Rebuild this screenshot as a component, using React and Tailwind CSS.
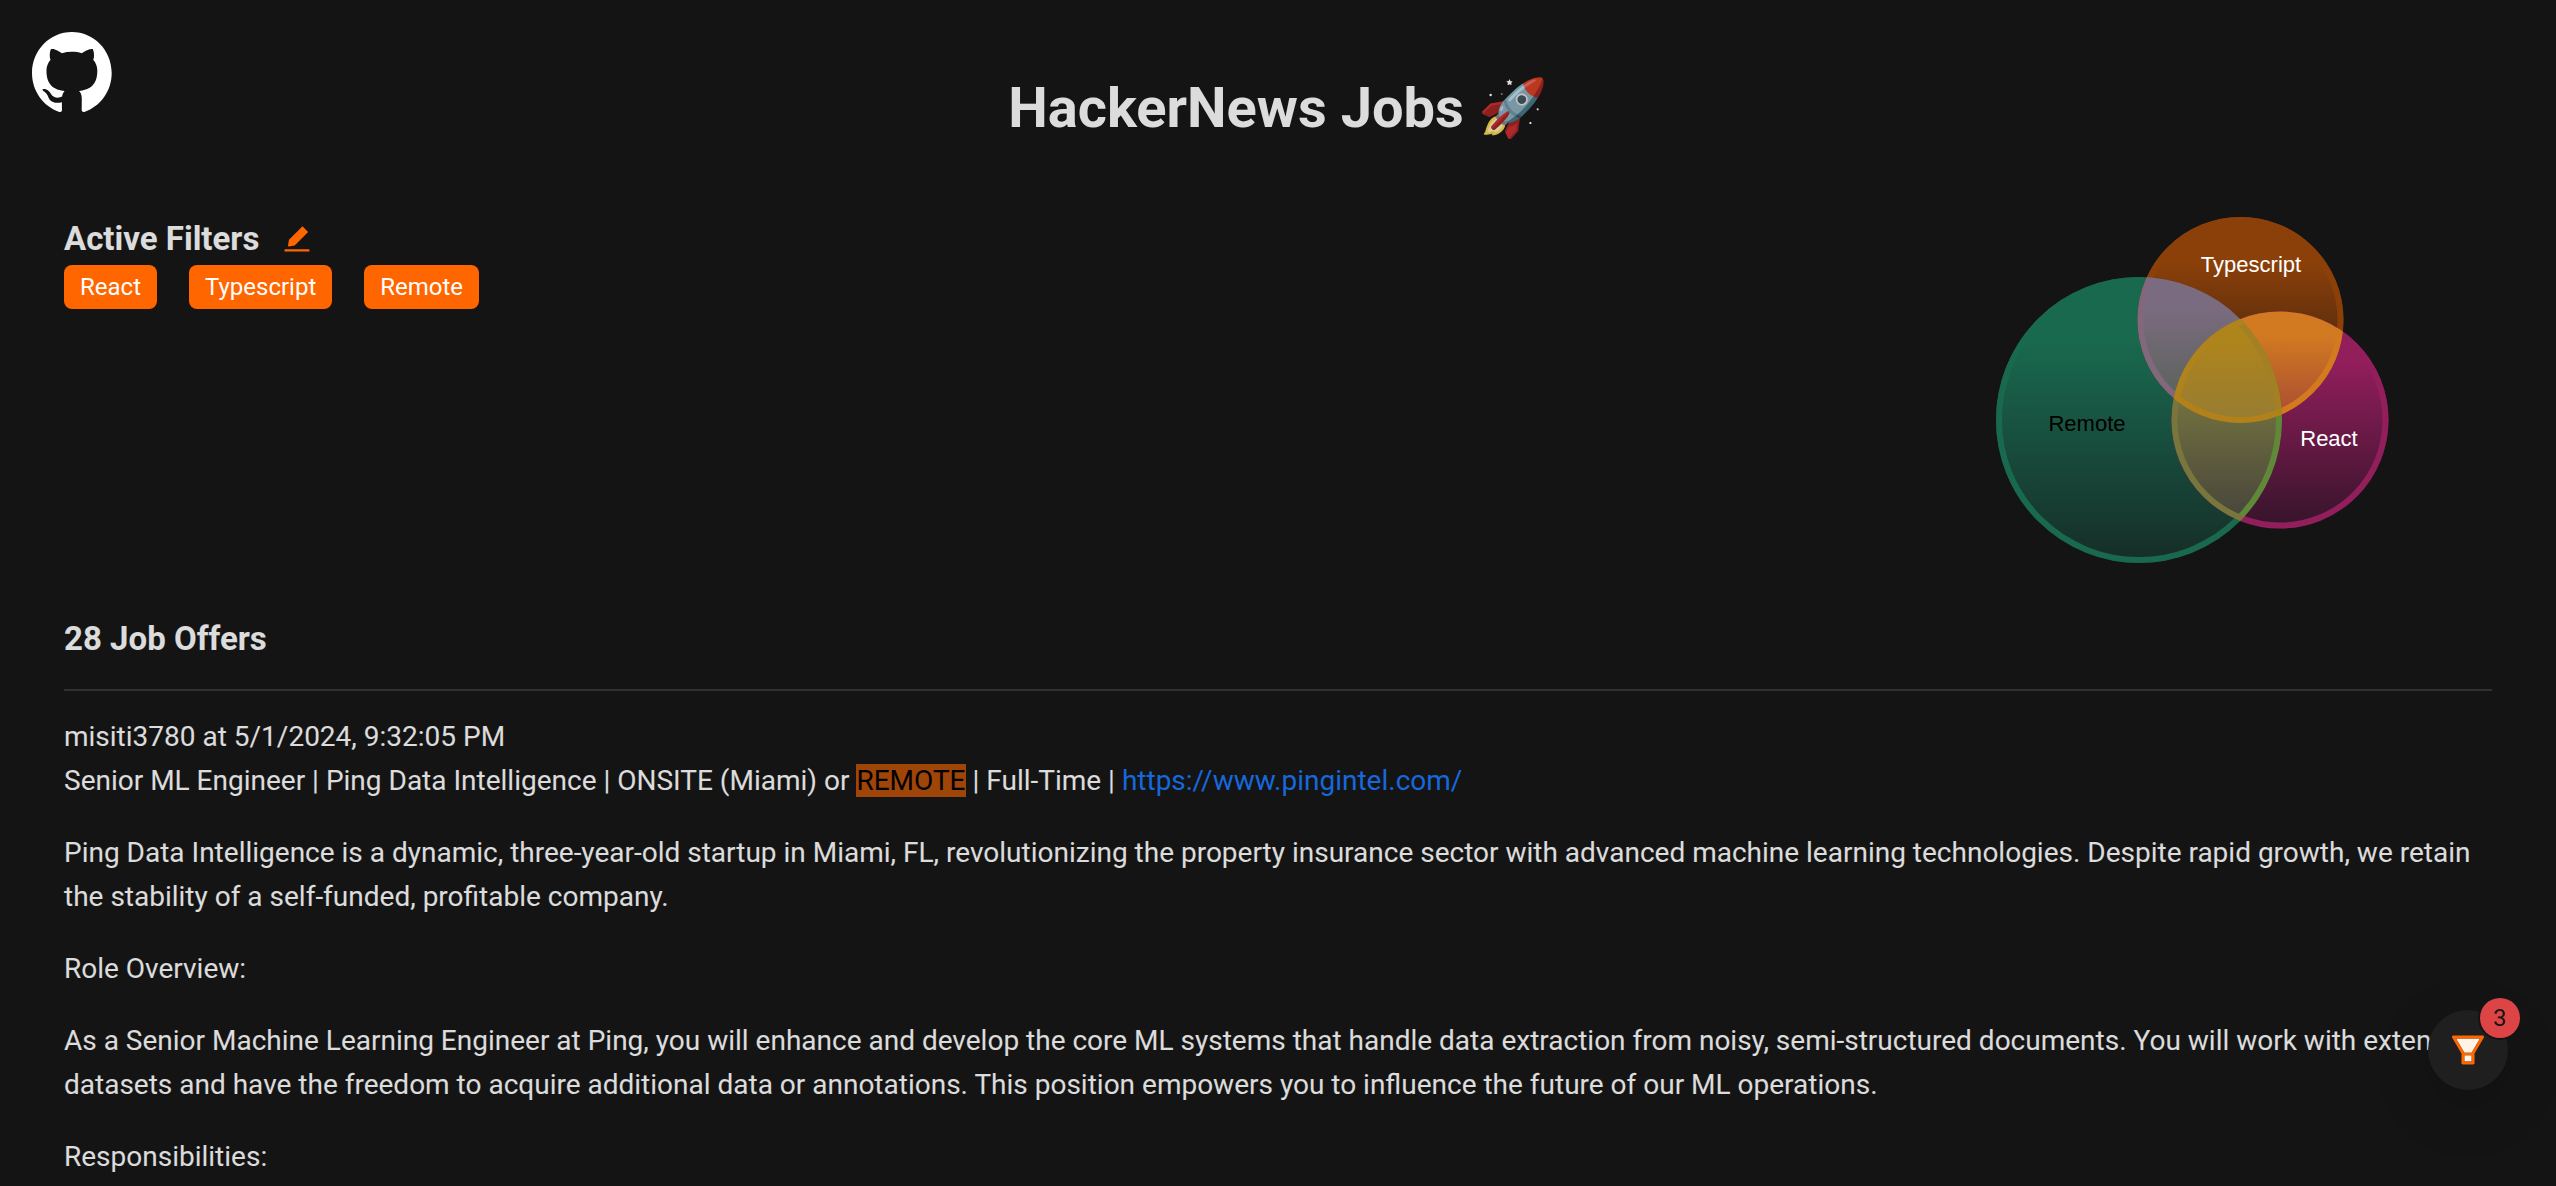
import React from "react";
import { AiFillEdit } from "react-icons/ai";

const FILTERS = ["React", "Typescript", "Remote"];

const CIRCLES = {
  remote: { cx: 247, cy: 207, r: 143 },
  typescript: { cx: 348.5, cy: 107, r: 103 },
  react: { cx: 388, cy: 207, r: 108.5 },
};

const BASES = [
  { name: "remote", from: "#19694f", to: "#162d27" },
  { name: "typescript", from: "#8b400a", to: "#28190f" },
  { name: "react", from: "#931e5c", to: "#35142a" },
];

const OVERLAPS = [
  {
    id: "remote-typescript",
    sets: ["remote", "typescript"],
    y1: 94,
    y2: 215,
    from: "#7b6b80",
    to: "#50614f",
    rings: { typescript: "#82687c" },
  },
  {
    id: "typescript-react",
    sets: ["typescript", "react"],
    y1: 122,
    y2: 214,
    from: "#d17a21",
    to: "#a44636",
    rings: { typescript: "#d37a1e" },
  },
  {
    id: "remote-react",
    sets: ["remote", "react"],
    y1: 180,
    y2: 308,
    from: "#74733f",
    to: "#47453b",
    rings: { remote: "#5f8938", react: "#78763c" },
  },
  {
    id: "all",
    sets: ["remote", "typescript", "react"],
    y1: 130,
    y2: 210,
    from: "#ae841d",
    to: "#967c33",
    rings: { remote: "#a38023", react: "#b0831c", typescript: "#b2811a" },
  },
];

const LABELS = [
  { text: "Typescript", x: 359, y: 59, fill: "#fff" },
  { text: "Remote", x: 195, y: 218, fill: "#000" },
  { text: "React", x: 437, y: 233, fill: "#fff" },
];

function Ring({ name, color }) {
  const { cx, cy, r } = CIRCLES[name];
  return <circle cx={cx} cy={cy} r={r - 3} fill="none" stroke={color} strokeWidth="6" />;
}

function Clip({ sets, children }) {
  return sets.reduce(
    (inner, name) => <g clipPath={`url(#clip-${name})`}>{inner}</g>,
    <g>{children}</g>
  );
}

function Venn() {
  return (
    <svg
      viewBox="0 0 600 400"
      className="h-[400px] w-[600px] shrink-0"
      role="img"
      aria-label="Overlap of the active filters"
    >
      <defs>
        {Object.entries(CIRCLES).map(([name, c]) => (
          <clipPath key={name} id={`clip-${name}`}>
            <circle {...c} />
          </clipPath>
        ))}
        {BASES.map((b) => (
          <linearGradient key={b.name} id={`fill-${b.name}`} x1="0" y1="0.22" x2="0" y2="1">
            <stop offset="0" stopColor={b.from} />
            <stop offset="1" stopColor={b.to} />
          </linearGradient>
        ))}
        {OVERLAPS.map((o) => (
          <linearGradient
            key={o.id}
            id={`fill-${o.id}`}
            gradientUnits="userSpaceOnUse"
            x1="0"
            x2="0"
            y1={o.y1}
            y2={o.y2}
          >
            <stop offset="0" stopColor={o.from} />
            <stop offset="1" stopColor={o.to} />
          </linearGradient>
        ))}
      </defs>
      {BASES.map((b) => (
        <g key={b.name}>
          <circle {...CIRCLES[b.name]} fill={`url(#fill-${b.name})`} />
          <Ring name={b.name} color={b.from} />
        </g>
      ))}
      {OVERLAPS.map((o) => (
        <Clip key={o.id} sets={o.sets}>
          <rect width="600" height="400" fill={`url(#fill-${o.id})`} />
          {Object.entries(o.rings).map(([name, color]) => (
            <Ring key={name} name={name} color={color} />
          ))}
        </Clip>
      ))}
      {LABELS.map((l) => (
        <text
          key={l.text}
          x={l.x}
          y={l.y}
          fill={l.fill}
          textAnchor="middle"
          className="font-['Liberation_Sans',sans-serif] text-[22px]"
        >
          {l.text}
        </text>
      ))}
    </svg>
  );
}

function GithubMark() {
  return (
    <svg viewBox="0 0 98 96" preserveAspectRatio="none" className="size-20" fill="#fff" aria-hidden="true">
      <path
        fillRule="evenodd"
        clipRule="evenodd"
        d="M48.854 0C21.839 0 0 22 0 49.217c0 21.756 13.993 40.172 33.405 46.69 2.427.49 3.316-1.059 3.316-2.362 0-1.141-.08-5.052-.08-9.127-13.59 2.934-16.42-5.867-16.42-5.867-2.184-5.704-5.42-7.17-5.42-7.17-4.448-3.015.324-3.015.324-3.015 4.934.326 7.523 5.052 7.523 5.052 4.367 7.496 11.404 5.378 14.235 4.074.404-3.178 1.699-5.378 3.074-6.6-10.839-1.141-22.243-5.378-22.243-24.283 0-5.378 1.94-9.778 5.014-13.2-.485-1.222-2.184-6.275.486-13.038 0 0 4.125-1.304 13.426 5.052a46.97 46.97 0 0 1 12.214-1.63c4.125 0 8.33.571 12.213 1.63 9.302-6.356 13.427-5.052 13.427-5.052 2.67 6.763.97 11.816.485 13.038 3.155 3.422 5.015 7.822 5.015 13.2 0 18.905-11.404 23.06-22.324 24.283 1.78 1.548 3.316 4.481 3.316 9.126 0 6.6-.08 11.897-.08 13.526 0 1.304.89 2.853 3.316 2.364 19.412-6.52 33.405-24.935 33.405-46.691C97.707 22 75.788 0 48.854 0z"
      />
    </svg>
  );
}

function FilterIcon() {
  return (
    <svg viewBox="64 64 896 896" className="size-9" aria-hidden="true">
      <path
        fill="#fff4e6"
        d="M420.6 798h182.9V642H420.6zM411 561.4l9.5 16.6h183l9.5-16.6L811.3 226H212.7z"
      />
      <path
        fill="#ff6600"
        d="M880.1 154H143.9c-24.5 0-39.8 26.7-27.5 48L349 597.4V838c0 17.7 14.2 32 31.8 32h262.4c17.6 0 31.8-14.3 31.8-32V597.4L907.7 202c12.2-21.3-3.1-48-27.6-48zM603.5 798H420.6V642h182.9v156zm9.5-236.6l-9.5 16.6h-183l-9.5-16.6L212.7 226h598.6L613 561.4z"
      />
    </svg>
  );
}

export default function App() {
  return (
    <div className="h-screen overflow-hidden bg-[#141414] font-[Roboto,sans-serif] text-[28px] leading-11 text-white/85">
      <a href="#github" aria-label="GitHub" className="absolute top-8 left-8">
        <GithubMark />
      </a>

      <main className="px-16">
        <h1 className="pt-[72px] pb-[69px] text-center text-[56px] leading-[72px] font-bold">
          HackerNews Jobs 🚀
        </h1>

        <section className="flex justify-between">
          <div>
            <div className="flex items-center gap-[22px]">
              <h2 className="text-[33px] leading-[52px] font-bold">Active Filters</h2>
              <button type="button" aria-label="Edit filters" className="text-[#ff6600]">
                <AiFillEdit className="size-8" />
              </button>
            </div>
            <ul className="flex gap-8">
              {FILTERS.map((name) => (
                <li key={name} className="rounded-lg bg-[#ff6600] px-4 text-2xl leading-11 text-white">
                  {name}
                </li>
              ))}
            </ul>
          </div>
          <Venn />
        </section>

        <h2 className="text-[33px] leading-[52px] font-bold">28 Job Offers</h2>
        <hr className="my-6 border-t-2 border-[#303030]" />

        <article>
          <div>misiti3780 at 5/1/2024, 9:32:05 PM</div>
          <p className="mb-7">
            Senior ML Engineer | Ping Data Intelligence | ONSITE (Miami) or{" "}
            <mark className="bg-[#a04508] text-black">REMOTE</mark> | Full-Time |{" "}
            <a href="https://www.pingintel.com/" className="text-[#1668dc]">
              https://www.pingintel.com/
            </a>
          </p>
          <p className="mb-7">
            Ping Data Intelligence is a dynamic, three-year-old startup in Miami, FL, revolutionizing the
            property insurance sector with advanced machine learning technologies. Despite rapid growth, we
            retain the stability of a self-funded, profitable company.
          </p>
          <p className="mb-7">Role Overview:</p>
          <p className="mb-7">
            As a Senior Machine Learning Engineer at Ping, you will enhance and develop the core ML systems
            that handle data extraction from noisy, semi-structured documents. You will work with extensive
            datasets and have the freedom to acquire additional data or annotations. This position empowers
            you to influence the future of our ML operations.
          </p>
          <p>Responsibilities:</p>
        </article>
      </main>

      <button
        type="button"
        aria-label="Filters, 3 active"
        className="fixed right-12 bottom-24 flex size-20 items-center justify-center rounded-full bg-[#1f1f1f] shadow-[0_12px_32px_rgba(0,0,0,0.08),0_6px_12px_-8px_rgba(0,0,0,0.12),0_18px_56px_16px_rgba(0,0,0,0.05)]"
      >
        <FilterIcon />
        <span className="absolute -top-3 -right-3 size-10 rounded-full bg-[#dc4446] text-center text-2xl leading-10 text-[#141414] shadow-[0_0_0_2px_#141414]">
          3
        </span>
      </button>
    </div>
  );
}
